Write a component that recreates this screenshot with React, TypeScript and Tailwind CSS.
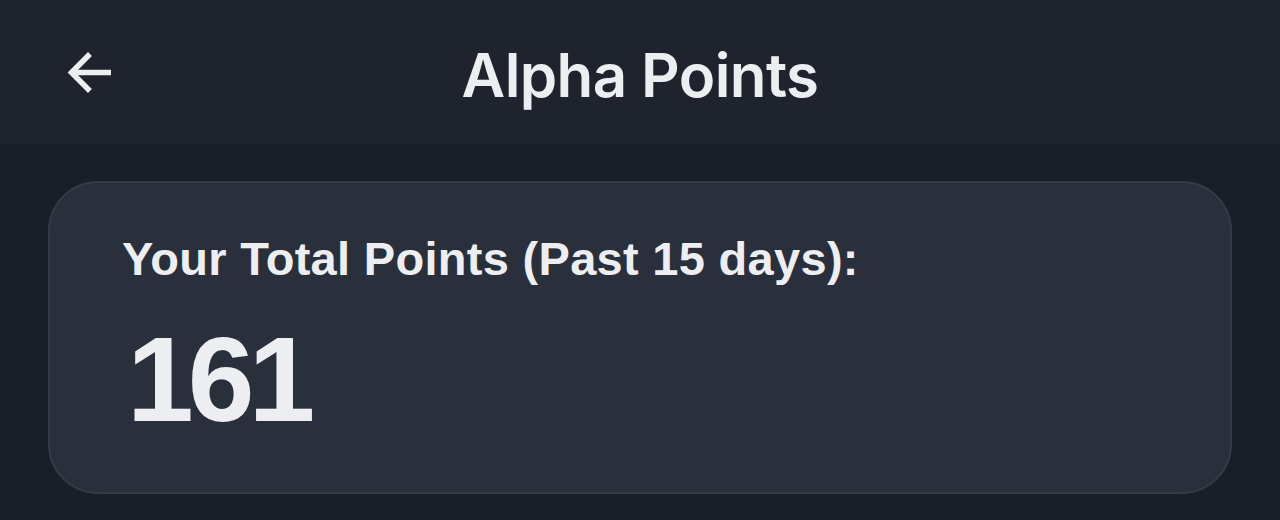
import React from "react";

export default function App() {
  return (
    <div className="w-[1280px] h-[520px] bg-[#1a1e26] overflow-hidden">
      <header className="h-[144px] bg-[#1f232e] grid grid-cols-[1fr_auto_1fr] items-center">
        <div className="pl-[62px] flex items-center">
          <svg width="54" height="44" viewBox="62 56 54 44" fill="none">
            <path d="M88 62 L71.5 78.5 L88 95" stroke="#eceef2" strokeWidth="5.5" strokeLinecap="square" strokeLinejoin="miter" />
            <path d="M72 78.5 H111" stroke="#eceef2" strokeWidth="5.5" strokeLinecap="butt" />
          </svg>
        </div>
        <h1 className="text-[60px] leading-none font-semibold text-[#eceef2] pt-[6px] tracking-[-0.6px] font-['Inter',sans-serif]">
          Alpha Points
        </h1>
        <div />
      </header>
      <main className="px-[48px] pt-[37px]">
        <section className="rounded-[50px] border-2 border-[#363b48] bg-[#2a2f3c] pl-[72px] pt-[48px] pb-[53px] font-['Liberation_Sans',Arial,sans-serif] text-[#eceef2]">
          <p className="text-[47px] leading-[56px] font-bold tracking-[0.3px]">Your Total Points (Past 15 days):</p>
          <p className="mt-[32px] ml-[5px] text-[120px] leading-none font-bold tracking-[-6px]">161</p>
        </section>
      </main>
    </div>
  );
}
